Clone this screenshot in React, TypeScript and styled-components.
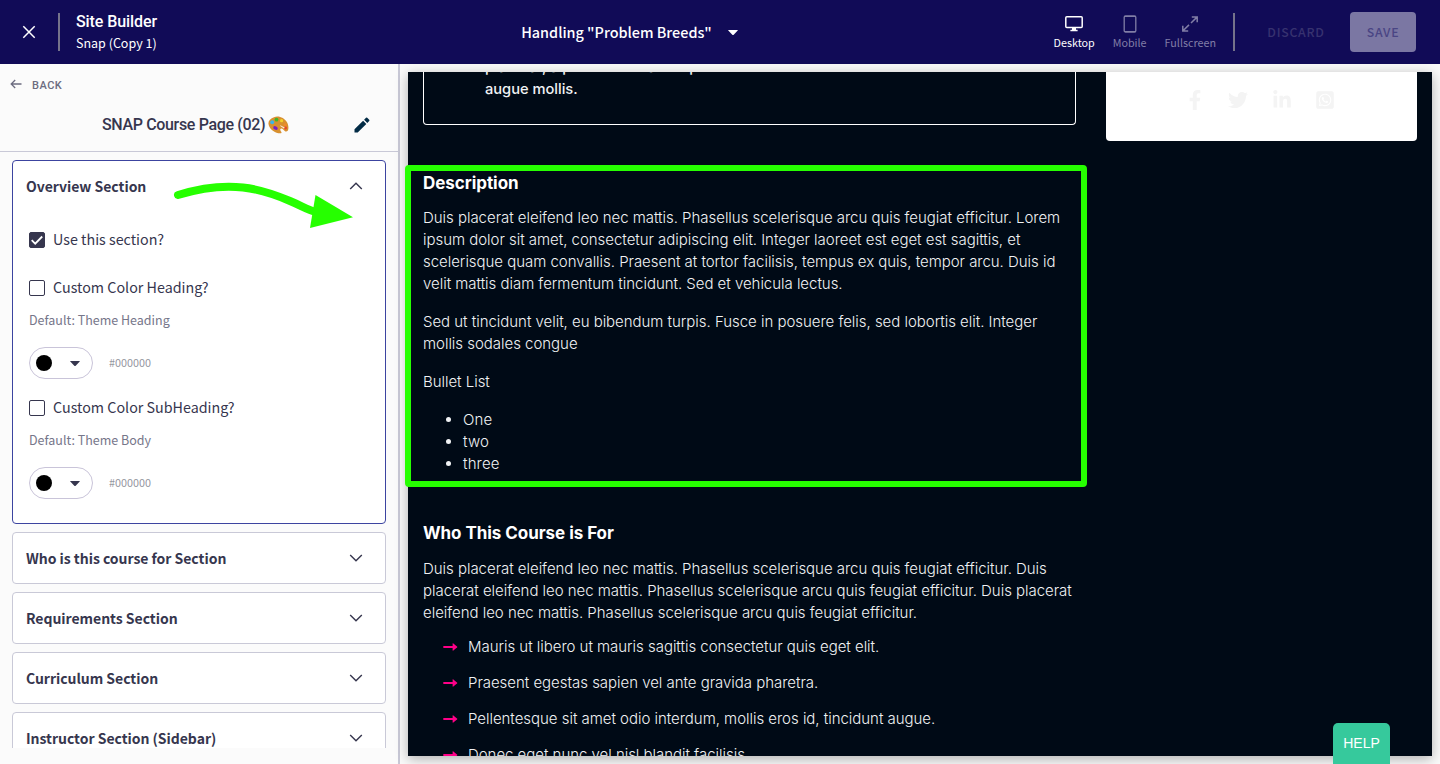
import React from 'react';
import styled, { createGlobalStyle } from 'styled-components';
import { FaFacebookF, FaTwitter, FaLinkedinIn, FaWhatsappSquare } from 'react-icons/fa';

const sans = '"Noto Sans CJK JP", "Noto Sans", sans-serif';
const display = 'Roboto, sans-serif';
const preview = 'Inter, "Open Sans", sans-serif';

const GlobalStyle = createGlobalStyle`
  *, *::before, *::after { box-sizing: border-box; }
  body { margin: 0; overflow: hidden; background: #fafafa; font-family: ${sans}; color: #36364e; }
  p, ul, h1, h2, h3 { margin: 0; padding: 0; }
  button { border: 0; background: none; padding: 0; font: inherit; color: inherit; }
  svg { display: block; }
`;

const Page = styled.div`
  position: relative;
  display: flex;
  flex-direction: column;
  width: 1440px;
  height: 764px;
  overflow: hidden;
`;

/* ---------- top bar ---------- */
const TopBar = styled.header`
  position: relative;
  z-index: 2;
  display: grid;
  grid-template-columns: 300px 1fr 500px;
  align-items: center;
  height: 64px;
  flex: none;
  background: #110b57;
  color: #fff;
`;
const BarLeft = styled.div`
  display: flex;
  align-items: center;
  padding-left: 22px;
`;
const BarDivider = styled.span<{ $left: number; $right: number }>`
  width: 2px;
  height: 38px;
  margin: 0 ${(p) => p.$right}px 0 ${(p) => p.$left}px;
  background: #75738b;
`;
const TitleStack = styled.div`
  display: flex;
  flex-direction: column;
  padding-bottom: 2px;
`;
const AppTitle = styled.h1`
  font: 500 16px/22px ${display};
  letter-spacing: -0.08px;
`;
const SiteName = styled.span`
  font-size: 12.5px;
  line-height: 19px;
`;
const PagePicker = styled.button`
  display: flex;
  align-items: center;
  justify-content: center;
  gap: 16px;
  padding-left: 39px;
  padding-right: 20px;
  font-weight: 500;
  font-size: 14.4px;
  line-height: 20px;
  white-space: nowrap;
`;
const BarRight = styled.div`
  display: flex;
  align-items: center;
  justify-content: flex-end;
  padding-right: 24px;
`;
const ViewModes = styled.div`
  display: flex;
  gap: 18px;
  padding-top: 1px;
`;
const ViewMode = styled.button<{ $active?: boolean }>`
  display: flex;
  flex-direction: column;
  align-items: center;
  color: ${(p) => (p.$active ? '#fff' : '#817ea6')};
  font-size: 10.75px;
  line-height: 14px;
  svg { margin-bottom: 3px; }
`;
const Discard = styled.button`
  width: 66px;
  font-weight: 500;
  font-size: 12.3px;
  letter-spacing: 0.75px;
  color: #37326f;
`;
const Save = styled.button`
  width: 66px;
  height: 40px;
  margin-left: 21px;
  border-radius: 4px;
  background: #7b77a3;
  color: #4a4584;
  font-weight: 500;
  font-size: 12.3px;
  letter-spacing: 0.75px;
`;

/* ---------- side panel ---------- */
const Body = styled.div`
  display: flex;
  flex: 1;
  min-height: 0;
`;
const SidePanel = styled.aside`
  display: flex;
  flex-direction: column;
  width: 400px;
  flex: none;
  border-right: 2px solid #c9c9d7;
  background: #fbfbfb;
  padding-bottom: 16px;
`;
const PanelHead = styled.div`
  height: 88px;
  flex: none;
  border-bottom: 1px solid #c9c9d7;
`;
const Back = styled.button`
  display: flex;
  align-items: center;
  gap: 10px;
  height: 41px;
  padding-left: 10px;
  font: 500 11px/16px ${display};
  letter-spacing: 0.5px;
  color: #6c6c80;
  svg { margin-bottom: 1px; }
`;
const BackLabel = styled.span`
  padding-top: 2px;
`;
const PanelTitleRow = styled.div`
  display: flex;
  align-items: center;
  height: 39px;
  padding: 0 28px 0 102px;
`;
const PanelTitle = styled.h2`
  flex: 1;
  display: flex;
  align-items: center;
  gap: 3px;
  font: 500 16px/24px ${display};
  letter-spacing: -0.35px;
`;
const SectionList = styled.div`
  display: flex;
  flex-direction: column;
  gap: 8px;
  flex: 1;
  min-height: 0;
  overflow: hidden;
  padding: 8px 12px 0;
`;
const Section = styled.section<{ $open?: boolean }>`
  flex: none;
  height: ${(p) => (p.$open ? 364 : 52)}px;
  border: 1px solid ${(p) => (p.$open ? '#3c44a0' : '#c9c9d7')};
  border-radius: 4px;
  background: #fff;
`;
const SectionHead = styled.div`
  display: flex;
  align-items: center;
  justify-content: space-between;
  height: 50px;
  padding: 0 22px 0 13px;
  font-weight: 700;
  font-size: 14px;
  letter-spacing: -0.03px;
`;
const Fields = styled.div`
  display: flex;
  flex-direction: column;
  padding-left: 16px;
`;
const CheckRow = styled.label<{ $gap: number }>`
  display: flex;
  align-items: center;
  gap: 8px;
  height: 24px;
  margin-top: ${(p) => p.$gap}px;
  font-size: 14.3px;
  line-height: 20px;
`;
const CheckLabel = styled.span`
  padding-bottom: 3px;
`;
const CheckBox = styled.span<{ $checked?: boolean }>`
  display: grid;
  place-items: center;
  width: 16px;
  height: 16px;
  border: 1px solid #36364e;
  border-radius: 2px;
  background: ${(p) => (p.$checked ? '#36364e' : '#fff')};
`;
const Hint = styled.p`
  margin-top: 10px;
  height: 20px;
  font-size: 12.5px;
  line-height: 20px;
  color: #76768a;
`;
const ColorRow = styled.div`
  display: flex;
  align-items: center;
  gap: 16px;
  height: 32px;
  margin-top: 17px;
`;
const HexValue = styled.span`
  padding-bottom: 2px;
  font-size: 10.8px;
  line-height: 16px;
  color: #96969f;
`;
const ColorPill = styled.button`
  display: flex;
  align-items: center;
  justify-content: space-between;
  width: 64px;
  height: 32px;
  padding: 0 12px 0 6px;
  border: 1px solid #c9c4d9;
  border-radius: 16px;
  background: #fff;
`;
const Swatch = styled.span`
  width: 16px;
  height: 16px;
  border-radius: 50%;
  background: #000;
`;

/* ---------- page preview ---------- */
const PreviewArea = styled.main`
  flex: 1;
  padding: 8px;
  background: #fafafa;
`;
const Canvas = styled.div`
  display: flex;
  align-items: flex-start;
  gap: 30px;
  height: 684px;
  overflow: hidden;
  padding: 0 15px;
  background: #000a16;
  color: #f0f2f4;
  font: 300 15px/22px ${preview};
  letter-spacing: -0.03px;
  box-shadow: 0 3px 12px rgba(0, 0, 0, 0.3);
`;
const MainColumn = styled.div`
  width: 653px;
  flex: none;
`;
const Quote = styled.div`
  display: flex;
  flex-direction: column;
  justify-content: flex-end;
  height: 53px;
  padding: 0 61px 24px;
  border: 1px solid #fff;
  border-top: 0;
  border-radius: 0 0 4px 4px;
  font-weight: 500;
  font-size: 14.7px;
`;
const Lines = styled.p<{ $top: number }>`
  margin-top: ${(p) => p.$top}px;
`;
const Line = styled.span`
  display: block;
  white-space: nowrap;
`;
const Block = styled.section<{ $top: number }>`
  padding-top: ${(p) => p.$top}px;
`;
const Heading = styled.h3`
  font: 700 17px/24px ${preview};
  letter-spacing: -0.05px;
  color: #fff;
`;
const Bullets = styled.ul`
  margin-top: 16px;
  padding-left: 40px;
  letter-spacing: 0.15px;
`;
const ArrowList = styled.ul`
  display: flex;
  flex-direction: column;
  gap: 14px;
  margin-top: 12px;
  padding-left: 20px;
  list-style: none;
`;
const ArrowItem = styled.li`
  display: flex;
  align-items: center;
  gap: 10px;
  white-space: nowrap;
`;
const ShareCard = styled.div`
  display: flex;
  align-items: center;
  justify-content: center;
  gap: 23.5px;
  width: 311px;
  height: 69px;
  padding: 0 3px 14px 0;
  flex: none;
  border-radius: 0 0 4px 4px;
  background: #fff;
  color: #f4f4f4;
  font-size: 20px;
`;

/* ---------- overlays ---------- */
const HighlightBox = styled.div`
  position: absolute;
  left: 405px;
  top: 165px;
  width: 682px;
  height: 322px;
  border: 6px solid #26ff00;
  border-radius: 4px;
  z-index: 3;
`;
const HighlightArrow = styled.svg`
  position: absolute;
  left: 170px;
  top: 175px;
  z-index: 3;
`;
const HelpTab = styled.button`
  position: absolute;
  z-index: 4;
  left: 1333px;
  top: 723px;
  width: 57px;
  height: 41px;
  border-radius: 5px 5px 0 0;
  background: #36c99c;
  color: #fff;
  font: 14px/39px "Liberation Sans", Arial, sans-serif;
`;

const Caret = ({ color }: { color: string }) => (
  <svg width="10" height="5" viewBox="0 0 10 5"><path d="M.4 0h9.2q.5.2.1.6L5.7 4.7q-.7.6-1.4 0L.3.6Q-.1.2.4 0z" fill={color} /></svg>
);

const Chevron = ({ up }: { up?: boolean }) => (
  <svg width="14" height="8" viewBox="0 0 14 8" fill="none" stroke="#36364e" strokeWidth="1.4">
    <path d={up ? 'M1.200 7L7 1.200 12.800 7' : 'M1.200 1L7 6.800 12.800 1'} />
  </svg>
);

const Palette = () => (
  <svg width="21" height="18" viewBox="0 0 21 18">
    <path d="M6 1.2C10.500-.7 16.500 1.800 19 6.300c1.700 3 1.900 7.400.4 8.800-1.500 1.300-3.300-.500-4.400-1.900-.8-1-2.600-.9-2.700.4-.1 1.200 1 1.900 1.200 2.700.2 1-1.500 1.300-3.200.9C5.700 16.300 1.200 12.500.5 8 0 5 2.400 2.500 6 1.200z" fill="#d8902f" />
    <circle cx="8.500" cy="3.700" r="1.9" fill="#3fb52b" />
    <circle cx="4.200" cy="6.200" r="2" fill="#3bb5e8" />
    <circle cx="13.600" cy="4.700" r="1.600" fill="#f3d02c" />
    <circle cx="17" cy="8.800" r="1.500" fill="#f08a2c" />
    <ellipse cx="7.500" cy="12" rx="2.400" ry="1.700" transform="rotate(25 7.500 12)" fill="#7a1fc4" />
    <circle cx="17.600" cy="12" r="1.400" fill="#e8452c" />
    <path d="M12.400 9.200l4.300 2.200-.8 1-3.700-2.500z" fill="#fbe9dc" />
  </svg>
);

const PinkArrow = () => (
  <svg width="15" height="10" viewBox="0 0 15 10">
    <path d="M1 5h10" stroke="#ff0088" strokeWidth="1.8" strokeLinecap="round" />
    <path d="M9.600 1.700Q9.600.9 10.300 1.400L14 4.400q.7.6 0 1.200L10.300 8.600q-.7.5-.7-.3z" fill="#ff0088" />
  </svg>
);

function ColorSetting({ label, hint, gap }: { label: string; hint: string; gap: number }) {
  return (
    <>
      <CheckRow $gap={gap}><CheckBox /><CheckLabel>{label}</CheckLabel></CheckRow>
      <Hint>{hint}</Hint>
      <ColorRow>
        <ColorPill><Swatch /><Caret color="#36364e" /></ColorPill>
        <HexValue>#000000</HexValue>
      </ColorRow>
    </>
  );
}

function Paragraph({ top, lines }: { top: number; lines: string[] }) {
  return <Lines $top={top}>{lines.map((l) => <Line key={l}>{l}</Line>)}</Lines>;
}

const closedSections = [
  'Who is this course for Section',
  'Requirements Section',
  'Curriculum Section',
  'Instructor Section (Sidebar)',
];

const audience = [
  'Mauris ut libero ut mauris sagittis consectetur quis eget elit.',
  'Praesent egestas sapien vel ante gravida pharetra.',
  'Pellentesque sit amet odio interdum, mollis eros id, tincidunt augue.',
  'Donec eget nunc vel nisl blandit facilisis.',
];

export default function App() {
  return (
    <Page>
      <GlobalStyle />
      <TopBar>
        <BarLeft>
          <svg width="14" height="14" viewBox="0 0 14 14" stroke="#fff" strokeWidth="1.5"><path d="M1.300 1.300l11.400 11.400M12.700 1.300L1.300 12.700" /></svg>
          <BarDivider $left={22} $right={16} />
          <TitleStack>
            <AppTitle>Site Builder</AppTitle>
            <SiteName>Snap (Copy 1)</SiteName>
          </TitleStack>
        </BarLeft>
        <PagePicker>Handling "Problem Breeds"<Caret color="#fff" /></PagePicker>
        <BarRight>
          <ViewModes>
            <ViewMode $active>
              <svg width="20" height="18" viewBox="0 0 20 18"><rect x="1.800" y="1.800" width="16.400" height="10.800" rx="1" fill="none" stroke="#fff" strokeWidth="1.500" /><path d="M8 12.500h4v2.300h1.600V16.300H6.400V14.800H8z" fill="#fff" /></svg>
              Desktop
            </ViewMode>
            <ViewMode>
              <svg width="14" height="18" viewBox="0 0 14 18" fill="none" stroke="currentColor"><rect x="1.200" y="1" width="11.600" height="16" rx="1.300" strokeWidth="1.300" /><path d="M1.500 1.500h11M1.500 16.500h11" strokeWidth="1.200" /></svg>
              Mobile
            </ViewMode>
            <ViewMode>
              <svg width="18" height="18" viewBox="0 0 18 18" fill="none" stroke="currentColor" strokeWidth="1.500"><path d="M10.800 1.900h5.400v5.300M16 2.100l-6 5.900M7.200 16H1.800v-5.300M2 15.800l6-5.900" /></svg>
              Fullscreen
            </ViewMode>
          </ViewModes>
          <BarDivider $left={17} $right={28} />
          <Discard>DISCARD</Discard>
          <Save>SAVE</Save>
        </BarRight>
      </TopBar>

      <Body>
        <SidePanel>
          <PanelHead>
            <Back>
              <svg width="12" height="10" viewBox="0 0 12 10" fill="none" stroke="currentColor" strokeWidth="1.300"><path d="M11.500 5H1.200M5.200 1L1.200 5l4 4" /></svg>
              <BackLabel>BACK</BackLabel>
            </Back>
            <PanelTitleRow>
              <PanelTitle>SNAP Course Page (02)<Palette /></PanelTitle>
              <svg width="16" height="16" viewBox="0 0 16 16" fill="#022b45"><path d="M.5 12.300V15.500h3.200l8.600-8.600-3.200-3.200zM10.100 2.700l3.200 3.200 1.900-1.900q.6-.6 0-1.200L13.200.8q-.6-.6-1.200 0z" /></svg>
            </PanelTitleRow>
          </PanelHead>
          <SectionList>
            <Section $open>
              <SectionHead>Overview Section<Chevron up /></SectionHead>
              <Fields>
                <CheckRow $gap={17}>
                  <CheckBox $checked>
                    <svg width="14" height="14" viewBox="0 0 14 14" fill="none" stroke="#fff" strokeWidth="1.800"><path d="M1.700 7.200l3.500 3.500 7-7.200" /></svg>
                  </CheckBox>
                  <CheckLabel>Use this section?</CheckLabel>
                </CheckRow>
                <ColorSetting gap={24} label="Custom Color Heading?" hint="Default: Theme Heading" />
                <ColorSetting gap={17} label="Custom Color SubHeading?" hint="Default: Theme Body" />
              </Fields>
            </Section>
            {closedSections.map((name) => (
              <Section key={name}><SectionHead>{name}<Chevron /></SectionHead></Section>
            ))}
          </SectionList>
        </SidePanel>

        <PreviewArea>
          <Canvas>
            <MainColumn>
              <Quote>
                <Line>placerat, a pretium nisl a semper</Line>
                <Line>augue mollis.</Line>
              </Quote>
              <Block $top={46}>
                <Heading>Description</Heading>
                <Paragraph top={12} lines={[
                  'Duis placerat eleifend leo nec mattis. Phasellus scelerisque arcu quis feugiat efficitur. Lorem',
                  'ipsum dolor sit amet, consectetur adipiscing elit. Integer laoreet est eget est sagittis, et',
                  'scelerisque quam convallis. Praesent at tortor facilisis, tempus ex quis, tempor arcu. Duis id',
                  'velit mattis diam fermentum tincidunt. Sed et vehicula lectus.',
                ]} />
                <Paragraph top={16} lines={[
                  'Sed ut tincidunt velit, eu bibendum turpis. Fusce in posuere felis, sed lobortis elit. Integer',
                  'mollis sodales congue',
                ]} />
                <Paragraph top={16} lines={['Bullet List']} />
                <Bullets><li>One</li><li>two</li><li>three</li></Bullets>
              </Block>
              <Block $top={46}>
                <Heading>Who This Course is For</Heading>
                <Paragraph top={13} lines={[
                  'Duis placerat eleifend leo nec mattis. Phasellus scelerisque arcu quis feugiat efficitur. Duis',
                  'placerat eleifend leo nec mattis. Phasellus scelerisque arcu quis feugiat efficitur. Duis placerat',
                  'eleifend leo nec mattis. Phasellus scelerisque arcu quis feugiat efficitur.',
                ]} />
                <ArrowList>
                  {audience.map((text) => <ArrowItem key={text}><PinkArrow />{text}</ArrowItem>)}
                </ArrowList>
              </Block>
            </MainColumn>
            <ShareCard>
              <FaFacebookF /><FaTwitter /><FaLinkedinIn /><FaWhatsappSquare />
            </ShareCard>
          </Canvas>
        </PreviewArea>
      </Body>

      <HighlightBox />
      <HighlightArrow width="190" height="60" viewBox="0 0 190 60">
        <path d="M8 20C60 4 92 14 120 26C132 31 138 35 146 37" fill="none" stroke="#26ff00" strokeWidth="8" strokeLinecap="round" />
        <path d="M145.500 20L183 42.300 140 53z" fill="#26ff00" />
      </HighlightArrow>
      <HelpTab>HELP</HelpTab>
    </Page>
  );
}
